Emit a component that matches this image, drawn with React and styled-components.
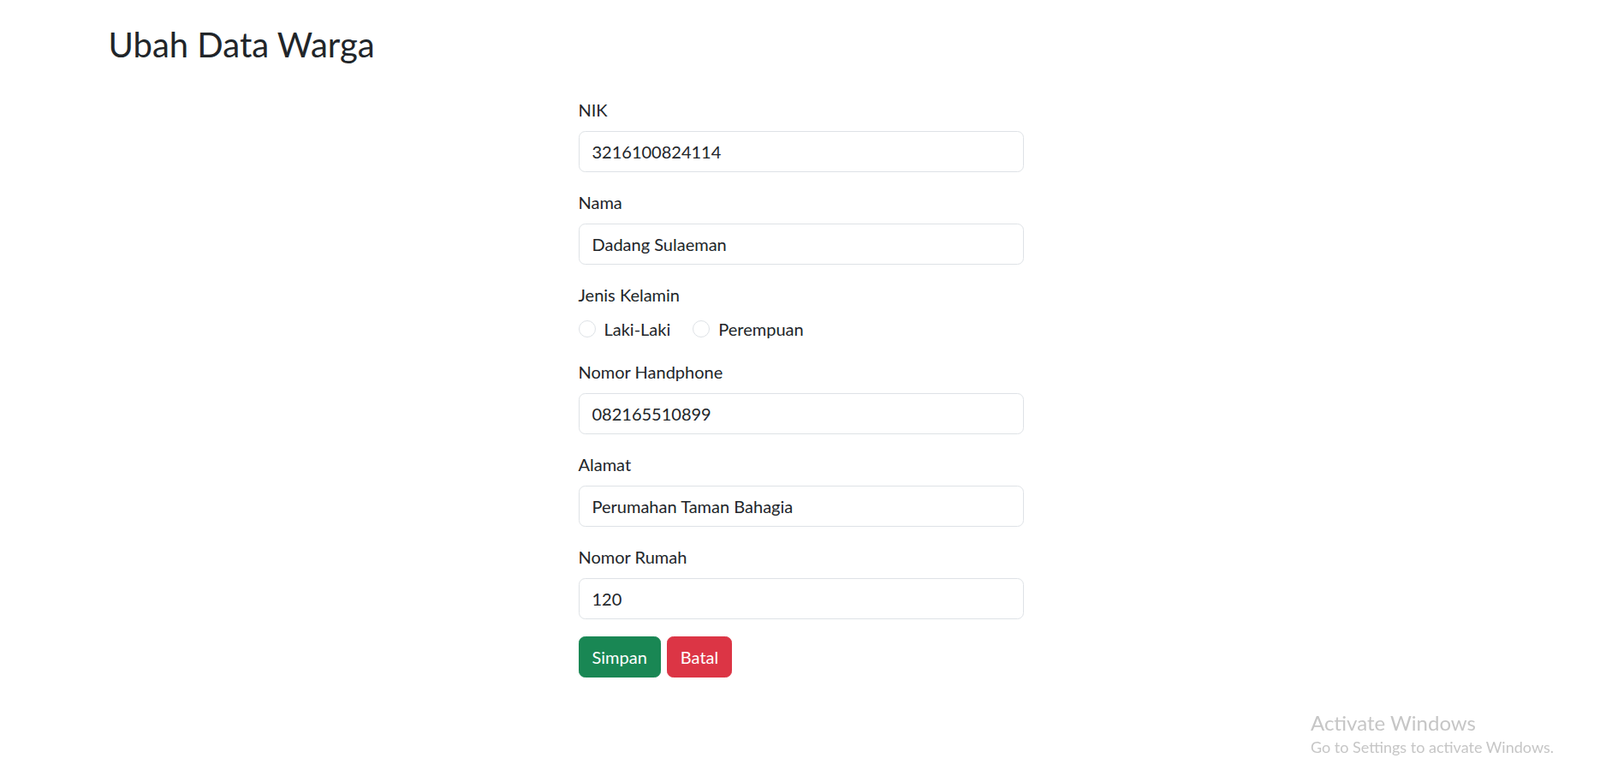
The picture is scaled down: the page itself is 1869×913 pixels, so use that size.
import React, { useState } from 'react';
import styled, { createGlobalStyle } from 'styled-components';

const GlobalStyle = createGlobalStyle`
    * {
        box-sizing: border-box;
    }
    body {
        margin: 0;
        background: #ffffff;
        color: #212529;
        font-family: "Segoe UI", Lato, "Liberation Sans", sans-serif;
        font-size: 20px;
        line-height: 1.5;
    }
`;

const Container = styled.div`
    max-width: 1650px;
    margin: 0 auto;
    padding: 28px 15px 0;
`;

const Title = styled.h2`
    margin: 0 0 10px;
    padding-left: 2px;
    font-size: 40px;
    font-weight: 400;
    line-height: 48px;
    color: #212529;
`;

const Row = styled.div`
    display: grid;
    grid-template-columns: repeat(3, 1fr);
    margin: 0 -15px;
    padding-top: 27px;
`;

const Column = styled.form`
    grid-column: 2;
    padding: 0 14px 0 16px;
`;

const Field = styled.div`
    margin-bottom: 20px;
`;

const Label = styled.label`
    display: block;
    margin-bottom: 10px;
    line-height: 30px;
    font-size: 20px;
    color: #212529;
`;

const Input = styled.input`
    display: block;
    width: 100%;
    height: 48px;
    padding: 8px 15px;
    font-family: inherit;
    font-size: 20px;
    line-height: 30px;
    color: #212529;
    background: #ffffff;
    border: 1px solid #dee2e6;
    border-radius: 7.5px;
    outline: none;
`;

const RadioGroup = styled.div`
    display: flex;
    min-height: 30px;
    margin-bottom: 4px;
`;

const RadioItem = styled.label`
    display: inline-flex;
    align-items: flex-start;
    margin-right: 26px;
    line-height: 30px;
    font-size: 20px;
    cursor: pointer;
`;

const Radio = styled.input`
    appearance: none;
    width: 20px;
    height: 20px;
    margin: 5px 10px 0 0;
    border: 1px solid #dee2e6;
    border-radius: 50%;
    background: #ffffff;
    flex-shrink: 0;

    &:checked {
        border: 6px solid #0d6efd;
    }
`;

const Actions = styled.div`
    display: flex;
    gap: 7px;
`;

const Button = styled.button`
    height: 48px;
    padding: 0 15px;
    font-family: inherit;
    font-size: 20px;
    line-height: 30px;
    color: #ffffff;
    background: ${props => props.variant === 'danger' ? '#dc3545' : '#198754'};
    border: 1px solid ${props => props.variant === 'danger' ? '#dc3545' : '#198754'};
    border-radius: 7.5px;
    cursor: pointer;
`;

const Watermark = styled.div`
    position: fixed;
    right: 54px;
    bottom: 29px;
    color: #c6c6c6;
    pointer-events: none;
`;

const WatermarkTitle = styled.div`
    font-size: 24px;
    line-height: 32px;
`;

const WatermarkText = styled.div`
    font-size: 18px;
    line-height: 24px;
`;

const fields = [
    { id: 'nik', label: 'NIK', value: '3216100824114' },
    { id: 'nama', label: 'Nama', value: 'Dadang Sulaeman' },
];

const moreFields = [
    { id: 'hp', label: 'Nomor Handphone', value: '082165510899' },
    { id: 'alamat', label: 'Alamat', value: 'Perumahan Taman Bahagia' },
    { id: 'rumah', label: 'Nomor Rumah', value: '120' },
];

const App = () => {
    const [gender, setGender] = useState('');

    const renderField = f => (
        <Field key={f.id}>
            <Label htmlFor={f.id}>{f.label}</Label>
            <Input id={f.id} type="text" defaultValue={f.value} />
        </Field>
    );

    return (
        <>
            <GlobalStyle />
            <Container>
                <Title>Ubah Data Warga</Title>
                <Row>
                    <Column onSubmit={e => e.preventDefault()}>
                        {fields.map(renderField)}
                        <Field>
                            <Label as="div">Jenis Kelamin</Label>
                            <RadioGroup>
                                <RadioItem>
                                    <Radio
                                        type="radio"
                                        name="jk"
                                        checked={gender === 'L'}
                                        onChange={() => setGender('L')}
                                    />
                                    Laki-Laki
                                </RadioItem>
                                <RadioItem>
                                    <Radio
                                        type="radio"
                                        name="jk"
                                        checked={gender === 'P'}
                                        onChange={() => setGender('P')}
                                    />
                                    Perempuan
                                </RadioItem>
                            </RadioGroup>
                        </Field>
                        {moreFields.map(renderField)}
                        <Actions>
                            <Button type="submit">Simpan</Button>
                            <Button type="button" variant="danger">Batal</Button>
                        </Actions>
                    </Column>
                </Row>
            </Container>
            <Watermark>
                <WatermarkTitle>Activate Windows</WatermarkTitle>
                <WatermarkText>Go to Settings to activate Windows.</WatermarkText>
            </Watermark>
        </>
    );
};

export default App;
